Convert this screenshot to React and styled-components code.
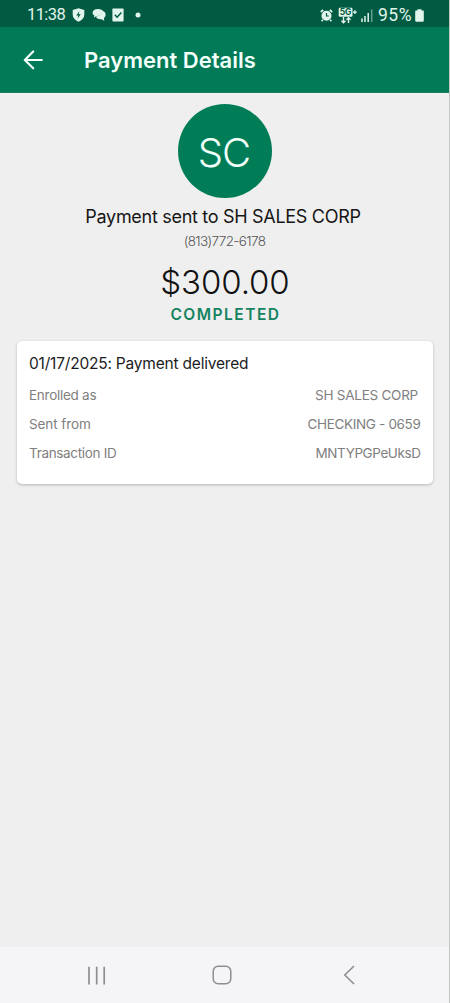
import React from "react";
import styled, { createGlobalStyle } from "styled-components";

const Global = createGlobalStyle`
  * { box-sizing: border-box; }
  body { margin: 0; background: #efefef; font-family: Inter, "Liberation Sans", sans-serif; }
`;

const Screen = styled.div`
  width: 450px;
  height: 1003px;
  display: flex;
  flex-direction: column;
  overflow: hidden;
  background: #efefef;
  border-right: 1px solid #c4c6c6;
  white-space: nowrap;
`;

const StatusBar = styled.div`
  height: 27px;
  flex: none;
  display: flex;
  align-items: center;
  justify-content: space-between;
  padding: 3px 25px 0 27px;
  background: #005b42;
  color: #e2f5ec;
`;

const StatusGroup = styled.div`
  display: flex;
  align-items: center;
`;

const StatusText = styled.span`
  font: 400 ${(p) => p.$size || 16.5}px/20px Roboto, sans-serif;
  letter-spacing: ${(p) => p.$spacing || "0"};
  margin-left: ${(p) => p.$gap || 0}px;
`;

const Icon = styled.svg`
  display: block;
  flex: none;
  margin-left: ${(p) => p.$gap || 0}px;
`;

const AppBar = styled.header`
  height: 66px;
  flex: none;
  display: flex;
  align-items: center;
  padding-left: 23px;
  background: #007a57;
  border-bottom: 1px solid #1c7d61;
  color: #f2fffa;
`;

const AppTitle = styled.h1`
  margin: 1px 0 0 41px;
  font-size: 22px;
  line-height: 26px;
  font-weight: 600;
`;

const Content = styled.main`
  flex: 1;
  display: flex;
  flex-direction: column;
  align-items: center;
  padding: 11px 16px 0 17px;
`;

const Avatar = styled.div`
  width: 94px;
  height: 94px;
  flex: none;
  border-radius: 50%;
  display: flex;
  align-items: center;
  justify-content: center;
  padding: 2px 2px 0 0;
  background: #007d56;
  color: #f0fff9;
  font-size: 40px;
  font-weight: 300;
  letter-spacing: -1px;
`;

const Recipient = styled.div`
  margin-top: 7px;
  padding-right: 4px;
  font-size: 18px;
  line-height: 24px;
  color: #161616;
  letter-spacing: -0.3px;
`;

const Phone = styled.div`
  margin-top: 3px;
  padding-right: 1px;
  font-size: 13.5px;
  line-height: 18px;
  font-weight: 300;
  color: #555;
  letter-spacing: -0.64px;
`;

const Amount = styled.div`
  margin-top: 12px;
  font-size: 33px;
  line-height: 40px;
  font-weight: 300;
  color: #111;
  letter-spacing: -0.1px;
`;

const Status = styled.div`
  margin-top: 3px;
  padding-left: 1px;
  font-size: 15.5px;
  line-height: 20px;
  font-weight: 600;
  color: #14835f;
  letter-spacing: 1.5px;
`;

const Card = styled.section`
  width: 416px;
  height: 143px;
  margin-top: 16px;
  padding: 13px 12px 0;
  border-radius: 5px;
  background: #fff;
  box-shadow: 0 1px 3px rgba(0, 0, 0, 0.24);
`;

const CardTitle = styled.h2`
  margin: 0 0 7px;
  font-size: 15.5px;
  line-height: 20px;
  font-weight: 400;
  color: #1c1c1c;
  letter-spacing: -0.2px;
`;

const Row = styled.div`
  height: 28.8px;
  display: flex;
  justify-content: space-between;
  align-items: center;
  font-size: 13.5px;
  color: #808080;
`;

const Cell = styled.span`
  letter-spacing: ${(p) => p.$spacing || "0"};
  padding-right: ${(p) => p.$inset || 0}px;
`;

const NavBar = styled.nav`
  height: 56px;
  flex: none;
  display: flex;
  align-items: center;
  padding-left: 87px;
  background: #f5f5f8;
`;

const rows = [
  { label: "Enrolled as", labelSpacing: "-0.27px", value: "SH SALES CORP", spacing: "-0.25px", inset: 3 },
  { label: "Sent from", labelSpacing: "-0.08px", value: "CHECKING - 0659", spacing: "-0.34px", inset: 0.5 },
  { label: "Transaction ID", labelSpacing: "-0.32px", value: "MNTYPGPeUksD", spacing: "-0.42px", inset: 0.5 },
];

export default function App() {
  return (
    <>
      <Global />
      <Screen>
        <StatusBar>
          <StatusGroup>
            <StatusText $spacing="-0.6px">11:38</StatusText>
            <Icon $gap={7} width="13" height="14" viewBox="0 0 13 14" fill="currentColor">
              <path d="M6.5.3 12.3 2v4.800c0 3.200-2.400 5.400-5.800 6.900C3.100 12.200.7 10 .7 6.800V2z" />
              <path d="M7.300 3.300 4.300 7.500h1.900l-.5 3 3-4.300H6.800z" fill="#005b42" />
            </Icon>
            <Icon $gap={6.5} width="14" height="14" viewBox="0 0 14 14" fill="currentColor">
              <path d="M6 1C2.800 1 .6 2.500.6 4.700c0 1.300.7 2.200 1.800 2.800L1.800 9.400l2.800-1.300 3-.3 4-3.800C10.800 2.200 8.800 1 6 1z" />
              <path d="M10.800 3.100c1.700.5 2.800 1.800 2.800 3.600 0 1.300-.6 2.400-1.600 3.200l.2 2.900-2.700-1.600c-2.800.3-5-.6-5.600-2.700 3-.3 6-1.900 6.900-5.400z" />
            </Icon>
            <Icon $gap={6.500} width="12" height="14" viewBox="0 0 12 14">
              <rect x=".4" y=".5" width="11.200" height="13" rx=".8" fill="currentColor" />
              <path d="m2.800 6.800 2.300 2.400 4.300-4.600" fill="none" stroke="#005b42" strokeWidth="1.500" />
            </Icon>
            <Icon $gap={11} width="6" height="6" viewBox="0 0 6 6">
              <circle cx="3" cy="3" r="2.500" fill="currentColor" />
            </Icon>
          </StatusGroup>
          <StatusGroup>
            <Icon width="13" height="13" viewBox="0 0 13 13" fill="none" stroke="currentColor">
              <circle cx="6.500" cy="6.700" r="4.300" fill="currentColor" strokeWidth="1.500" />
              <path d="M.8 3 3.200.9M12.200 3 9.800.9M2.700 10.800l-1 1.400M10.300 10.800l1 1.400" strokeWidth="1.700" />
              <path d="M6.500 4v3h2.300" stroke="#005b42" strokeWidth="1.200" />
            </Icon>
            <Icon $gap={5} width="20" height="17" viewBox="0 0 20 17" fill="none">
              <rect x=".7" y=".8" width="13.800" height="9" rx="1.200" fill="currentColor" />
              <text x="7.600" y="8.300" textAnchor="middle" fontFamily="Inter, sans-serif" fontSize="8.500" fontWeight="700" fill="#005b42">5G</text>
              <path d="M15 5.200h3.800M16.900 3.300v3.800" stroke="currentColor" strokeWidth="1.300" />
              <path d="M5.500 10v5.700m-2-2 2 2 2-2M10.500 16v-5.200m-2 2 2-2 2 2" stroke="currentColor" strokeWidth="1.400" />
            </Icon>
            <Icon $gap={3} width="12" height="13" viewBox="0 0 12 13" stroke="currentColor" strokeWidth="1.500">
              <path d="M1 9.500V13M4 7v6M7.200 4v9" />
              <path d="M10.700.5V13" opacity=".45" />
            </Icon>
            <StatusText $size={17.5} $spacing="0.5px" $gap={5.5}>95%</StatusText>
            <Icon $gap={3} width="9" height="13" viewBox="0 0 9 13" fill="currentColor">
              <path d="M2.500 1.500V.3h4v1.200H8q.8 0 .8.800v9.200q0 1.300-1.300 1.300h-6Q.2 12.800.2 11.500V2.300q0-.8.8-.8z" />
            </Icon>
          </StatusGroup>
        </StatusBar>

        <AppBar>
          <Icon width="20" height="20" viewBox="0 0 20 20" fill="none" stroke="currentColor" strokeWidth="2.200" strokeLinecap="round" strokeLinejoin="round">
            <path d="M18.800 10H2M10.200 1.500 1.800 10l8.400 8.300" />
          </Icon>
          <AppTitle>Payment Details</AppTitle>
        </AppBar>

        <Content>
          <Avatar>SC</Avatar>
          <Recipient>Payment sent to SH SALES CORP</Recipient>
          <Phone>(813)772-6178</Phone>
          <Amount>$300.00</Amount>
          <Status>COMPLETED</Status>
          <Card>
            <CardTitle>01/17/2025: Payment delivered</CardTitle>
            {rows.map((r) => (
              <Row key={r.label}>
                <Cell $spacing={r.labelSpacing}>{r.label}</Cell>
                <Cell $spacing={r.spacing} $inset={r.inset}>{r.value}</Cell>
              </Row>
            ))}
          </Card>
        </Content>

        <NavBar>
          <Icon width="19" height="19" viewBox="0 0 19 19" stroke="#8e8e91" strokeWidth="1.700">
            <path d="M2 .8v17.700M9.700.8v17.700M17.200.8v17.700" />
          </Icon>
          <Icon $gap={106} width="20" height="20" viewBox="0 0 20 20" fill="none" stroke="#8e8e91" strokeWidth="1.500">
            <rect x="1.200" y="1.200" width="17.600" height="17.600" rx="5" />
          </Icon>
          <Icon $gap={111} width="12" height="20" viewBox="0 0 12 20" fill="none" stroke="#8e8e91" strokeWidth="1.600">
            <path d="M11 1 1.800 10l9.200 9" />
          </Icon>
        </NavBar>
      </Screen>
    </>
  );
}
